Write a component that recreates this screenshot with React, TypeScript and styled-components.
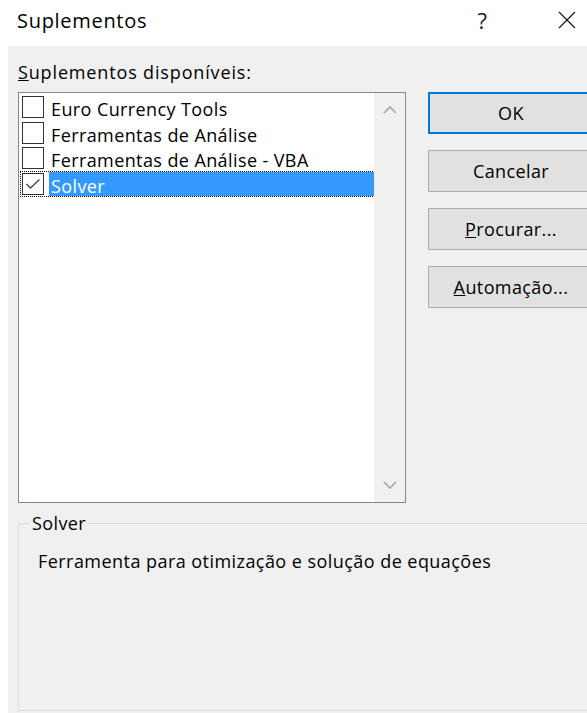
import React from 'react'
import styled, { createGlobalStyle } from 'styled-components'

const GlobalStyle = createGlobalStyle`
  html, body {
    margin: 0;
    padding: 0;
    background: #ffffff;
    overflow: hidden;
  }
  body {
    font-family: "Open Sans", "Noto Sans", sans-serif;
    color: #000000;
  }
`;

interface AddIn {
  name: string;
  checked: boolean;
}

const addIns: AddIn[] = [
  { name: 'Euro Currency Tools', checked: false },
  { name: 'Ferramentas de Análise', checked: false },
  { name: 'Ferramentas de Análise - VBA', checked: false },
  { name: 'Solver', checked: true },
];

const CheckMark = () => (
  <svg width="16" height="12" viewBox="0 0 16 12">
    <path d="M1.5 6 L5.5 10 L14.5 1.5" fill="none" stroke="#4a4a4a" strokeWidth="1.4" />
  </svg>
);

const ChevronUp = () => (
  <svg width="14" height="8" viewBox="0 0 14 8">
    <path d="M1 7 L7 1 L13 7" fill="none" stroke="#a6a6a6" strokeWidth="1.6" />
  </svg>
);

const ChevronDown = () => (
  <svg width="14" height="8" viewBox="0 0 14 8">
    <path d="M1 1 L7 7 L13 1" fill="none" stroke="#a6a6a6" strokeWidth="1.6" />
  </svg>
);

const CloseIcon = () => (
  <svg width="18" height="18" viewBox="0 0 18 18">
    <path d="M1 1 L17 17 M17 1 L1 17" stroke="#1a1a1a" strokeWidth="1.2" />
  </svg>
);

export default function App() {
  const selected = 3;
  return (
    <>
      <GlobalStyle />
      <Window>
        <TitleBar>
          <Title>Suplementos</Title>
          <TitleButtons>
            <Help>?</Help>
            <CloseIcon />
          </TitleButtons>
        </TitleBar>
        <Body>
          <Label><u>S</u>uplementos disponíveis:</Label>
          <TopRow>
            <ListBox>
              <Items>
                {addIns.map((item, i) => (
                  <Row key={item.name} $focused={i === selected}>
                    <Box>{item.checked && <CheckMark />}</Box>
                    <RowText $selected={i === selected}>{item.name}</RowText>
                  </Row>
                ))}
              </Items>
              <ScrollBar>
                <ChevronUp />
                <ChevronDown />
              </ScrollBar>
            </ListBox>
            <Buttons>
              <Button $primary>OK</Button>
              <Button>Cancelar</Button>
              <Button><u>P</u>rocurar...</Button>
              <Button><u>A</u>utomação...</Button>
            </Buttons>
          </TopRow>
          <Group>
            <Legend>Solver</Legend>
            <Description>Ferramenta para otimização e solução de equações</Description>
          </Group>
        </Body>
      </Window>
    </>
  );
}

const Window = styled.div`
  width: 587px;
  height: 713px;
  display: flex;
  flex-direction: column;
  background: #ffffff;
  overflow: hidden;
`;

const TitleBar = styled.div`
  height: 46px;
  flex-shrink: 0;
  display: flex;
  align-items: center;
  justify-content: space-between;
  padding: 0 11px 6px 17px;
  box-sizing: border-box;
`;

const Title = styled.div`
  font-size: 20px;
  letter-spacing: 0.7px;
`;

const TitleButtons = styled.div`
  display: flex;
  align-items: center;
  gap: 71px;
`;

const Help = styled.span`
  font-size: 22px;
  color: #1a1a1a;
`;

const Body = styled.div`
  flex: 1;
  margin-left: 8px;
  background: #f0f0f0;
  padding: 16px 0 0 10px;
  display: flex;
  flex-direction: column;
  font-size: 18px;
  letter-spacing: 0.4px;
`;

const Label = styled.div`
  height: 30px;
  line-height: 20px;
  letter-spacing: 0.85px;
`;

const TopRow = styled.div`
  display: flex;
  gap: 22px;
`;

const ListBox = styled.div`
  width: 388px;
  height: 411px;
  box-sizing: border-box;
  border: 1px solid #828790;
  background: #ffffff;
  display: flex;
  flex-shrink: 0;
`;

const Items = styled.div`
  flex: 1;
  padding: 2px 0 0 2px;
  display: flex;
  flex-direction: column;
  gap: 1.67px;
`;

const Row = styled.div<{ $focused?: boolean }>`
  height: 24px;
  display: flex;
  align-items: center;
  gap: 5px;
  outline: ${p => (p.$focused ? '1px dotted #000000' : 'none')};
  outline-offset: 0;
`;

const Box = styled.div`
  width: 22px;
  height: 22px;
  box-sizing: border-box;
  border: 1px solid #333333;
  background: #ffffff;
  display: flex;
  align-items: center;
  justify-content: center;
  margin-left: 1px;
`;

const RowText = styled.div<{ $selected?: boolean }>`
  flex: 1;
  height: 24px;
  box-sizing: border-box;
  line-height: 24px;
  padding: 2px 0 0 2px;
  white-space: nowrap;
  background: ${p => (p.$selected ? '#3399ff' : 'transparent')};
  color: ${p => (p.$selected ? '#ffffff' : '#000000')};
`;

const ScrollBar = styled.div`
  width: 31px;
  background: #f0f0f0;
  display: flex;
  flex-direction: column;
  align-items: center;
  justify-content: space-between;
  padding: 13px 0 13px;
`;

const Buttons = styled.div`
  width: 166px;
  flex-shrink: 0;
  display: flex;
  flex-direction: column;
  gap: 16px;
`;

const Button = styled.div<{ $primary?: boolean }>`
  height: 42px;
  box-sizing: border-box;
  background: #e1e1e1;
  border: ${p => (p.$primary ? '2px solid #0078d7' : '1px solid #adadad')};
  display: flex;
  align-items: center;
  justify-content: center;
`;

const Group = styled.fieldset`
  margin: 8px 0 0 0;
  width: 600px;
  height: 200px;
  box-sizing: border-box;
  border: 1px solid #dcdcdc;
  padding: 14px 0 0 19px;
`;

const Legend = styled.legend`
  padding: 0 2px;
  margin-left: -8px;
`;

const Description = styled.div`
  letter-spacing: 0.45px;
`;
